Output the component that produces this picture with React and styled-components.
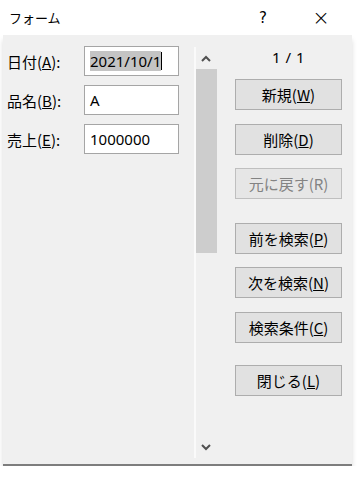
import React from 'react';
import styled, { createGlobalStyle } from 'styled-components'

const Global = createGlobalStyle`
  body {
    margin: 0;
    background: #fff;
    font-family: "Noto Sans CJK JP", "Noto Sans", sans-serif;
    color: #000;
  }
`

const TitleBar = styled.div`
  height: 35px;
  display: flex;
  align-items: center;
  padding: 0 9px 0 9px;
  font-size: 13px;
`

const Title = styled.div`
  flex: 1;
`

const TitleButton = styled.div`
  width: 58px;
  text-align: center;
  font-size: ${props => props.big ? '21px' : '15px'};
  font-family: "DejaVu Sans", sans-serif;
  font-weight: ${props => props.big ? 200 : 400};
`

const Panel = styled.div`
  margin: 0 7px 0 3px;
  height: 429px;
  background: #f0f0f0;
  border-bottom: 2px solid #7d7d7d;
  box-shadow: 0 5px 5px rgba(0,0,0,0.15);
  display: grid;
  grid-template-columns: 191px 24px 1fr;
`

const Fields = styled.div`
  padding: 11px 0 0 4px;
  display: flex;
  flex-direction: column;
  gap: 9px;
`

const FieldRow = styled.div`
  display: flex;
  align-items: center;
  height: 30px;
`

const Label = styled.label`
  width: 77px;
  font-size: 15px;
`

const Input = styled.div`
  box-sizing: border-box;
  width: 95px;
  height: 30px;
  background: #fff;
  border: 1px solid #a5a5a5;
  padding: 0 5px;
  display: flex;
  align-items: center;
  font-size: 15px;
  font-family: "Noto Sans", sans-serif;
`

const Selected = styled.span`
  background: #c4c4c4;
`

const Caret = styled.span`
  display: inline-block;
  width: 1px;
  height: 18px;
  background: #000;
`

const ScrollBar = styled.div`
  margin: 12px 0 6px;
  border-left: 2px solid #fafafa;
  display: flex;
  flex-direction: column;
`

const Arrow = styled.div`
  height: 22px;
  display: flex;
  align-items: center;
  justify-content: center;
  padding-right: 2px;
`

const Thumb = styled.div`
  height: 184px;
  width: 21px;
  background: #cdcdcd;
`

const Track = styled.div`
  flex: 1;
`

const Buttons = styled.div`
  display: flex;
  flex-direction: column;
  align-items: center;
  padding: 12px 10px 0 17px;
`

const Counter = styled.div`
  font-size: 15px;
  font-family: "Noto Sans", sans-serif;
  height: 20px;
  line-height: 20px;
  margin-bottom: 12px;
  letter-spacing: 0.5px;
`

const Button = styled.div`
  box-sizing: border-box;
  width: 107px;
  height: 31px;
  border: 1px solid ${props => props.disabled ? '#bfbfbf' : '#adadad'};
  background: ${props => props.disabled ? '#e6e6e6' : '#e1e1e1'};
  color: ${props => props.disabled ? '#838383' : '#000'};
  display: flex;
  align-items: center;
  justify-content: center;
  font-size: 15px;
  margin-top: ${props => props.gap || 0}px;
`

function Chevron({ up }) {
  return (
    <svg width="10" height="7" viewBox="0 0 10 7">
      <path d={up ? 'M1 6 L5 2 L9 6' : 'M1 1 L5 5 L9 1'} fill="none" stroke="#505050" strokeWidth="2" />
    </svg>
  )
}

export default function App() {
  return (
    <>
      <Global />
      <TitleBar>
        <Title>フォーム</Title>
        <TitleButton>?</TitleButton>
        <TitleButton big>×</TitleButton>
      </TitleBar>
      <Panel>
        <Fields>
          <FieldRow>
            <Label>日付(<u>A</u>):</Label>
            <Input><Selected>2021/10/1</Selected><Caret /></Input>
          </FieldRow>
          <FieldRow>
            <Label>品名(<u>B</u>):</Label>
            <Input>A</Input>
          </FieldRow>
          <FieldRow>
            <Label>売上(<u>E</u>):</Label>
            <Input>1000000</Input>
          </FieldRow>
        </Fields>
        <ScrollBar>
          <Arrow><Chevron up /></Arrow>
          <Thumb />
          <Track />
          <Arrow><Chevron /></Arrow>
        </ScrollBar>
        <Buttons>
          <Counter>1 / 1</Counter>
          <Button>新規(<u>W</u>)</Button>
          <Button gap={14}>削除(<u>D</u>)</Button>
          <Button gap={13} disabled>元に戻す(R)</Button>
          <Button gap={24}>前を検索(<u>P</u>)</Button>
          <Button gap={13}>次を検索(<u>N</u>)</Button>
          <Button gap={14}>検索条件(<u>C</u>)</Button>
          <Button gap={22}>閉じる(<u>L</u>)</Button>
        </Buttons>
      </Panel>
    </>
  )
}
